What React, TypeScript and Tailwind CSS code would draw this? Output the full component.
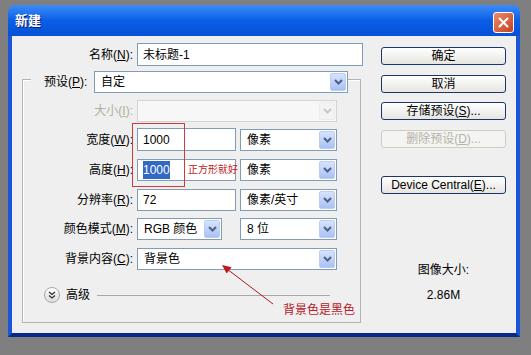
import React from 'react';

const font = { fontFamily: '"Liberation Sans", "Noto Sans CJK SC", sans-serif' };

function Chevron({ disabled }: { disabled?: boolean }) {
  return (
    <svg width="9" height="6" viewBox="0 0 9 6">
      <path d="M1 1 L4.5 4.5 L8 1" fill="none" stroke={disabled ? '#c8c8c8' : '#4d6185'} strokeWidth="2" />
    </svg>
  );
}

function Select({ className, value, disabled }: { className: string; value?: string; disabled?: boolean }) {
  return (
    <div
      className={
        'flex h-[22px] shrink-0 items-center border p-[1px] ' +
        (disabled ? 'border-[#d4d4d4] bg-[#f7f7f7] ' : 'border-[#7f9db9] bg-white ') +
        className
      }
    >
      <span className="flex-1 truncate pl-[5px] text-[12px] text-black">{value}</span>
      <div
        className={
          'flex h-full w-[16px] items-center justify-center rounded-[2px] border ' +
          (disabled
            ? 'border-[#ececec] bg-[#f3f3f3]'
            : 'border-[#b9cdf6] bg-gradient-to-b from-[#d6e3fd] to-[#a9c1f3]')
        }
      >
        <Chevron disabled={disabled} />
      </div>
    </div>
  );
}

function Input({ className, children }: { className: string; children?: React.ReactNode }) {
  return (
    <div className={'flex h-[22px] shrink-0 items-center border border-[#7f9db9] bg-white pl-[5px] text-[12px] text-black ' + className}>
      {children}
    </div>
  );
}

function Label({ children, muted }: { children: React.ReactNode; muted?: boolean }) {
  return (
    <div className={'w-[114px] shrink-0 pr-[4px] text-right text-[12px] ' + (muted ? 'text-[#b0ae9e]' : 'text-black')}>
      {children}
    </div>
  );
}

function Btn({ children, disabled, className }: { children: React.ReactNode; disabled?: boolean; className: string }) {
  return (
    <div
      className={
        'flex h-[18px] items-center justify-center rounded-[3px] border text-[12px] ' +
        (disabled
          ? 'border-[#cfcdc2] bg-[#f4f4f2] text-[#b5b2a6] '
          : 'border-[#1c3668] bg-gradient-to-b from-white to-[#e6e5e0] text-black ') +
        className
      }
    >
      {children}
    </div>
  );
}

export default function App() {
  return (
    <div className="relative h-[355px] w-[531px] overflow-hidden bg-[#7f7f7f] pl-[8px] pt-[5px]" style={font}>
      <div className="flex h-[332px] w-[512px] flex-col overflow-hidden rounded-t-[7px]">
        {/* title bar */}
        <div className="flex h-[31px] items-center justify-between bg-gradient-to-b from-[#3b8cf7] via-[#0a5ee6] to-[#0650d8] pl-[7px] pr-[6px] pt-[1px]">
          <span className="text-[13px] font-bold text-white [text-shadow:1px_1px_0_#0a1e6e]">新建</span>
          <div className="mt-[2px] flex h-[21px] w-[21px] items-center justify-center rounded-[3px] border border-white bg-gradient-to-br from-[#ec8a6a] to-[#c2401d]">
            <svg width="11" height="11" viewBox="0 0 11 11">
              <path d="M1.5 1.5 L9.5 9.5 M9.5 1.5 L1.5 9.5" stroke="white" strokeWidth="2" strokeLinecap="round" />
            </svg>
          </div>
        </div>

        {/* client area */}
        <div className="flex flex-1 border-x-[4px] border-b-[4px] border-x-[#1a56d8] border-b-[#0a2a8a] bg-[#efefef]">
          {/* left column */}
          <div className="flex w-[351px] flex-col">
            <div className="mt-[7px] flex items-center">
              <div className="w-[125px] pr-[4px] text-right text-[12px] text-black">
                名称(<u>N</u>):
              </div>
              <Input className="h-[23px] w-[226px]">未标题-1</Input>
            </div>

            <div className="ml-[10px] mt-[13px] flex h-[244px] w-[339px] flex-col border border-[#b4b4b4] shadow-[inset_1px_1px_0_#ffffff]">
              <div className="-mt-[9px] ml-[8px] flex w-[317px] items-center bg-[#efefef] pl-[13px]">
                <div className="w-[50px] text-[12px] text-black">
                  预设(<u>P</u>):
                </div>
                <Select className="w-[254px]" value="自定" />
              </div>

              <div className="mt-[7px] flex items-center">
                <Label muted>
                  大小(<u>I</u>):
                </Label>
                <Select className="w-[200px]" disabled />
              </div>

              <div className="mt-[6px] flex items-center">
                <Label>
                  宽度(<u>W</u>):
                </Label>
                <Input className="h-[23px] w-[99px]">1000</Input>
                <Select className="ml-[4px] w-[97px]" value="像素" />
              </div>

              <div className="mt-[8px] flex items-center">
                <Label>
                  高度(<u>H</u>):
                </Label>
                <Input className="w-[99px]">
                  <span className="bg-[#316ac5] text-white">1000</span>
                </Input>
                <Select className="ml-[4px] w-[97px]" value="像素" />
              </div>

              <div className="mt-[8px] flex items-center">
                <Label>
                  分辨率(<u>R</u>):
                </Label>
                <Input className="w-[99px]">72</Input>
                <Select className="ml-[4px] w-[97px]" value="像素/英寸" />
              </div>

              <div className="mt-[7px] flex items-center">
                <Label>
                  颜色模式(<u>M</u>):
                </Label>
                <Select className="w-[85px]" value="RGB 颜色" />
                <Select className="ml-[18px] w-[97px]" value="8 位" />
              </div>

              <div className="mt-[8px] flex items-center">
                <Label>
                  背景内容(<u>C</u>):
                </Label>
                <Select className="w-[200px]" value="背景色" />
              </div>

              <div className="mt-[17px] flex h-[16px] items-center pl-[21px]">
                <div className="flex h-[16px] w-[16px] items-center justify-center rounded-full border border-[#a8a8a8] bg-gradient-to-b from-white to-[#dcdcdc]">
                  <svg width="8" height="8" viewBox="0 0 8 8">
                    <path d="M1 1 L4 3.5 L7 1 M1 4.5 L4 7 L7 4.5" fill="none" stroke="#333" strokeWidth="1.3" />
                  </svg>
                </div>
                <span className="ml-[6px] text-[12px] text-black">高级</span>
                <div className="ml-[7px] h-[1px] w-[233px] bg-[#a8a8a8]" />
              </div>
            </div>
          </div>

          {/* right column */}
          <div className="ml-[18px] flex w-[125px] flex-col">
            <Btn className="mt-[11px]">确定</Btn>
            <Btn className="mt-[10px]">取消</Btn>
            <Btn className="mt-[9px]">
              存储预设(<u>S</u>)...
            </Btn>
            <Btn className="mt-[10px]" disabled>
              删除预设(<u>D</u>)...
            </Btn>
            <Btn className="mt-[28px]">
              Device Central(<u>E</u>)...
            </Btn>
            <div className="mt-[67px] text-center text-[12px] text-black">图像大小:</div>
            <div className="mt-[7px] text-center text-[12px] text-black">2.86M</div>
          </div>
        </div>
      </div>

      {/* red annotations */}
      <div className="absolute left-[132px] top-[123px] h-[64px] w-[53px] border border-[#d03a3a]" />
      <div className="absolute left-[188px] top-[163px] text-[10px] leading-[14px] text-[#c01818]">正方形就好</div>
      <svg className="absolute left-[215px] top-[258px]" width="65" height="50" viewBox="0 0 65 50">
        <path d="M58 46 L12 11" stroke="#b01818" strokeWidth="1" />
        <path d="M7 7 L16.6 9.3 L11.7 15.6 Z" fill="#c01818" />
      </svg>
      <div className="absolute left-[283px] top-[302px] text-[12px] leading-[16px] text-[#b8202a]">背景色是黑色</div>
    </div>
  );
}
